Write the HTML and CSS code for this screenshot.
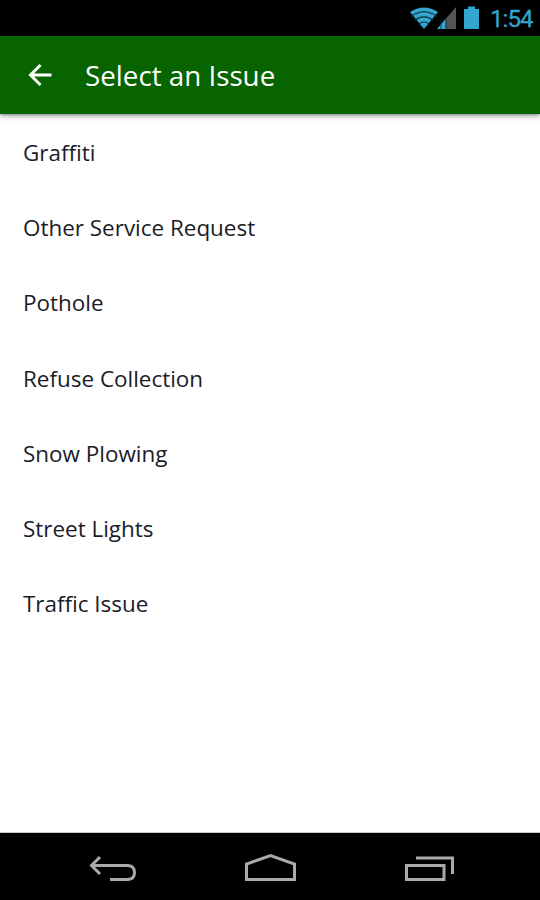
FILE: index.html
```html
<!DOCTYPE html>
<html lang="en">
<head>
<meta charset="utf-8">
<title>Select an Issue</title>
<link rel="stylesheet" href="styles.css">
</head>
<body>
<div class="status">
  <svg class="status-icons" width="82" height="36" viewBox="408 0 82 36">
    <path class="blue" d="M410 12Q424 3 438 12L424 29Z"/>
    <path class="arcs" d="M411 16.500Q424 7 437 16.500M414.500 20.500Q424 13 433.500 20.500M418 24.500Q424 19.500 430 24.500"/>
    <path class="dim" d="M456 7V29H437Z"/>
    <path class="blue" d="M445.500 19V29H437Z"/>
    <path class="bars" d="M441 20V29M446 17V29"/>
    <path class="blue" d="M464 9H468V6.500H475V9H479V29H464Z"/>
  </svg>
  <span class="clock">1:54</span>
</div>
<header class="appbar">
  <svg class="back" width="24" height="24" viewBox="0 0 24 24"><path d="M23.500 12H2.500M12.500 2L2.500 12L12.500 22"/></svg>
  <h1>Select an Issue</h1>
</header>
<ul class="list">
  <li>Graffiti</li>
  <li>Other Service Request</li>
  <li>Pothole</li>
  <li>Refuse Collection</li>
  <li>Snow Plowing</li>
  <li>Street Lights</li>
  <li>Traffic Issue</li>
</ul>
<nav class="nav">
  <svg width="540" height="67" viewBox="0 833 540 67">
    <path d="M100 857L91.500 865.500L100 874M92 865.500H128Q134.500 866 134.500 872.500Q134.500 879 128 879.500H110"/>
    <path d="M246.500 879.500V864L270.500 855.500L294.500 864V879.500Z"/>
    <path d="M406.500 865.500H444V879.500H406.500ZM416 858H452.500V874"/>
  </svg>
</nav>
</body>
</html>
```

FILE: styles.css
```css
* { box-sizing: border-box; }
body { margin: 0; width: 540px; height: 900px; display: flex; flex-direction: column; background: #fff; font-family: "Open Sans", sans-serif; overflow: hidden; }
.status { height: 36px; background: #000; display: flex; justify-content: flex-end; align-items: center; padding-right: 8px; }
.blue { fill: #33a5cf; }
.dim { fill: #555; }
.arcs { fill: none; stroke: #0a2530; stroke-width: 1.2; }
.bars { fill: none; stroke: #0a2530; stroke-width: .8; }
.clock { width: 42px; padding-top: 2px; color: #33a5cf; font: 400 24px/36px Roboto, sans-serif; letter-spacing: -.9px; white-space: nowrap; -webkit-text-stroke: .3px #33a5cf; }
.appbar { height: 78px; background: #086400; display: flex; align-items: center; padding-left: 28px; box-shadow: 0 1px 4px rgba(0,0,0,.5), 0 3px 10px rgba(0,0,0,.1); color: #fff; }
.back { fill: none; stroke: #fff; stroke-width: 3; }
h1 { margin: 0 0 0 33px; font-size: 27.750px; font-weight: 400; line-height: 40px; }
.list { list-style: none; margin: 0; padding: 1px 0 0 23px; flex: 1; }
.list li { height: 75.200px; line-height: 75px; font-size: 22.450px; color: #1b1c28; }
.nav { height: 68px; background: #000; border-top: 1px solid #c8c8c8; }
.nav svg { display: block; fill: none; stroke: #aaa; stroke-width: 3; }
```
